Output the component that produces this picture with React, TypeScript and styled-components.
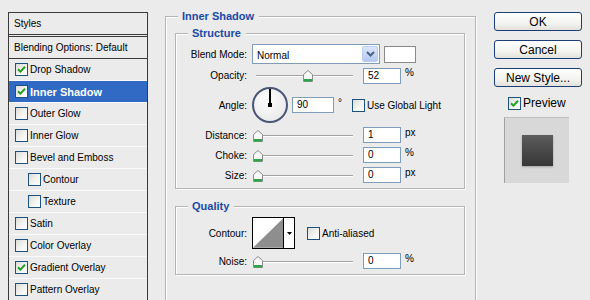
import styled, { createGlobalStyle } from 'styled-components';

const GlobalStyles = createGlobalStyle`
  html, body {
    margin: 0;
    padding: 0;
    background: #ebebeb;
  }
  body {
    font-family: 'Liberation Sans', Arial, sans-serif;
    font-size: 10px;
    color: #000;
  }
`;

const Page = styled.div`
  display: flex;
  align-items: flex-start;
  width: 590px;
  height: 300px;
  padding-top: 12px;
  box-sizing: border-box;
  overflow: hidden;
`;

// ---------- левый список стилей ----------
const Sidebar = styled.div`
  margin-left: 8px;
  width: 140px;
  box-sizing: border-box;
  border: 1px solid #3a3a3a;
  border-bottom: none;
  flex-shrink: 0;
`;

const HeaderRow = styled.div`
  height: 21px;
  line-height: 21px;
  padding-left: 5px;
  border-bottom: 3px double #3a3a3a;
`;

const BlendRow = styled.div`
  height: 21px;
  line-height: 21px;
  padding-left: 5px;
  border-bottom: 1px solid #3a3a3a;
`;

const StyleRow = styled.div<{ $active?: boolean; $indent?: boolean }>`
  display: flex;
  align-items: center;
  gap: 2px;
  height: 21px;
  padding-left: ${p => (p.$indent ? 19 : 6)}px;
  border-bottom: 1px solid #fafafa;
  background: ${p => (p.$active ? '#316ac5' : 'transparent')};
  color: ${p => (p.$active ? '#fff' : '#000')};
  font-weight: ${p => (p.$active ? 'bold' : 'normal')};
  font-size: ${p => (p.$active ? 11 : 10)}px;
`;

const Box = styled.span`
  position: relative;
  display: inline-flex;
  align-items: center;
  justify-content: center;
  width: 13px;
  height: 13px;
  box-sizing: border-box;
  border: 1px solid #1c5180;
  background: linear-gradient(135deg, #dcdcd7 0%, #f5f5f3 60%, #fff 100%);
  flex-shrink: 0;
`;

const Check = ({ on }: { on?: boolean }) => (
  <Box>
    {on && (
      <svg width="9" height="9" viewBox="0 0 9 9">
        <path d="M1 4.2 L3.4 6.6 L8 1.8" fill="none" stroke="#21a121" strokeWidth="2" />
      </svg>
    )}
  </Box>
);

// ---------- средняя часть ----------
const Main = styled.div`
  margin-left: 17px;
  padding-top: 4px;
  flex-shrink: 0;
`;

const Group = styled.div<{ $outer?: boolean }>`
  position: relative;
  box-sizing: border-box;
  border: 1px solid #b4b4b4;
  box-shadow: inset 1px 1px 0 #fff, 1px 1px 0 #fff;
  width: ${p => (p.$outer ? 311 : 290)}px;
  padding: ${p => (p.$outer ? '16px 10px 0 9px' : '10px 0 3px 0')};
  min-height: ${p => (p.$outer ? '300px' : '0')};
  & + & {
    margin-top: 17px;
  }
`;

const Legend = styled.span`
  position: absolute;
  top: -8px;
  left: 12px;
  padding: 0 5px 0 4px;
  background: #ebebeb;
  color: #1a49a8;
  font-weight: bold;
  font-size: 11px;
  line-height: 14px;
`;

const Row = styled.div<{ $h: number; $mt?: number }>`
  display: flex;
  align-items: center;
  height: ${p => p.$h}px;
  margin-top: ${p => p.$mt ?? 0}px;
`;

const Label = styled.span`
  width: 71px;
  margin-right: 5px;
  text-align: right;
  flex-shrink: 0;
`;

const Select = styled.div`
  display: flex;
  align-items: center;
  width: 128px;
  height: 20px;
  box-sizing: border-box;
  border: 1px solid #7f9db9;
  background: #fff;
  padding: 1px;
`;

const SelectText = styled.span`
  flex: 1;
  padding-left: 3px;
  padding-top: 2px;
`;

const SelectButton = styled.span`
  display: flex;
  align-items: center;
  justify-content: center;
  width: 16px;
  height: 16px;
  border-radius: 2px;
  background: linear-gradient(#dbe6fb, #b5c9f2);
  border: 1px solid #b9ccf3;
  box-sizing: border-box;
`;

const Swatch = styled.span`
  width: 32px;
  height: 17px;
  margin-left: 4px;
  box-sizing: border-box;
  border: 1px solid #8a8a8a;
  background: #fff;
`;

const Track = styled.div<{ $w?: number }>`
  position: relative;
  width: ${p => p.$w ?? 101}px;
  height: 11px;
  flex-shrink: 0;
  &::before {
    content: '';
    position: absolute;
    left: 4px;
    right: 0;
    top: 5px;
    height: 1px;
    background: #a4a4a4;
    border-bottom: 1px solid #fff;
  }
`;

const Thumb = styled.svg`
  position: absolute;
  top: 0;
`;

const Slider = ({ value }: { value: number }) => (
  <Track>
    <Thumb width="10" height="12" viewBox="0 0 10 12" style={{ left: Math.round(1 + value * 0.96) }}>
      <path d="M0.5 11.5 V4.5 L5 0.5 L9.5 4.5 V11.5 Z" fill="#f8f8f8" stroke="#8c8c8c" />
      <rect x="1" y="9" width="8" height="2.5" fill="#2ea54a" />
    </Thumb>
  </Track>
);

const Field = styled.span<{ $w?: number; $ml?: number }>`
  display: inline-block;
  width: ${p => p.$w ?? 38}px;
  height: 16px;
  line-height: 14px;
  margin-left: ${p => p.$ml ?? 10}px;
  padding-left: 4px;
  box-sizing: border-box;
  border: 1px solid #7f9db9;
  background: #fff;
  flex-shrink: 0;
`;

const Unit = styled.span`
  margin-left: 4px;
  position: relative;
  top: -3px;
`;

const Dial = styled.div`
  position: relative;
  width: 36px;
  height: 36px;
  box-sizing: border-box;
  border-radius: 50%;
  border: 2px solid #4b5676;
  background: radial-gradient(circle at 40% 35%, #fdfdfd, #e4e4e4);
  flex-shrink: 0;
  &::before {
    content: '';
    position: absolute;
    left: 15px;
    top: 0;
    width: 2px;
    height: 16px;
    background: #000;
  }
  &::after {
    content: '';
    position: absolute;
    left: 14px;
    top: 14px;
    width: 4px;
    height: 4px;
    background: #000;
  }
`;

const CheckLabel = styled.label<{ $ml?: number }>`
  display: inline-flex;
  align-items: center;
  gap: 2px;
  margin-left: ${p => p.$ml ?? 0}px;
`;

const ContourPicker = styled.div`
  display: flex;
  width: 43px;
  height: 32px;
  box-sizing: border-box;
  border: 1px solid #000;
  background: #fff;
  flex-shrink: 0;
`;

const ContourDrop = styled.span`
  display: flex;
  align-items: center;
  justify-content: center;
  width: 10px;
  border-left: 1px solid #000;
`;

// ---------- правая колонка ----------
const Side = styled.div`
  display: flex;
  flex-direction: column;
  align-items: flex-start;
  margin-left: 18px;
  width: 88px;
`;

const Button = styled.button<{ $mt?: number }>`
  width: 88px;
  height: 19px;
  margin-top: ${p => p.$mt ?? 0}px;
  padding: 0;
  border: 1px solid #1c3e77;
  border-radius: 3px;
  background: linear-gradient(#ffffff 0%, #f4f4f0 60%, #e2e1dc 100%);
  font-family: 'Liberation Sans', Arial, sans-serif;
  font-size: 12px;
  color: #000;
`;

const PreviewLine = styled(CheckLabel)`
  margin: 9px 0 0 14px;
  font-size: 12px;
`;

const PreviewBox = styled.div`
  display: flex;
  align-items: center;
  justify-content: center;
  width: 65px;
  height: 66px;
  margin: 7px 0 0 10px;
  box-sizing: border-box;
  border-left: 1px solid #a0a0a0;
  border-top: 1px solid #c0c0c0;
  background: #d8d8d8;
`;

const PreviewSquare = styled.div`
  width: 31px;
  height: 31px;
  background: linear-gradient(#5c5c5c, #363636);
  box-shadow: 0 1px 2px rgba(0, 0, 0, 0.25);
`;

const styles: { name: string; on?: boolean; active?: boolean; indent?: boolean }[] = [
  { name: 'Drop Shadow', on: true },
  { name: 'Inner Shadow', on: true, active: true },
  { name: 'Outer Glow' },
  { name: 'Inner Glow' },
  { name: 'Bevel and Emboss' },
  { name: 'Contour', indent: true },
  { name: 'Texture', indent: true },
  { name: 'Satin' },
  { name: 'Color Overlay' },
  { name: 'Gradient Overlay', on: true },
  { name: 'Pattern Overlay' },
];

const App = () => (
  <Page>
    <GlobalStyles />
    <Sidebar>
      <HeaderRow>Styles</HeaderRow>
      <BlendRow>Blending Options: Default</BlendRow>
      {styles.map(s => (
        <StyleRow key={s.name} $active={s.active} $indent={s.indent}>
          <Check on={s.on} />
          {s.name}
        </StyleRow>
      ))}
    </Sidebar>

    <Main>
      <Group $outer>
        <Legend>Inner Shadow</Legend>
        <Group>
          <Legend>Structure</Legend>
          <Row $h={20}>
            <Label>Blend Mode:</Label>
            <Select>
              <SelectText>Normal</SelectText>
              <SelectButton>
                <svg width="9" height="6" viewBox="0 0 9 6">
                  <path d="M1 1 L4.5 4.5 L8 1" fill="none" stroke="#4d6185" strokeWidth="2" />
                </svg>
              </SelectButton>
            </Select>
            <Swatch />
          </Row>
          <Row $h={19} $mt={2}>
            <Label>Opacity:</Label>
            <Slider value={52} />
            <Field>52</Field>
            <Unit>%</Unit>
          </Row>
          <Row $h={40}>
            <Label>Angle:</Label>
            <Dial />
            <Field $w={42} $ml={4}>90</Field>
            <Unit>°</Unit>
            <CheckLabel $ml={10}>
              <Check />
              Use Global Light
            </CheckLabel>
          </Row>
          <Row $h={20}>
            <Label>Distance:</Label>
            <Slider value={0} />
            <Field>1</Field>
            <Unit>px</Unit>
          </Row>
          <Row $h={20}>
            <Label>Choke:</Label>
            <Slider value={0} />
            <Field>0</Field>
            <Unit>%</Unit>
          </Row>
          <Row $h={20}>
            <Label>Size:</Label>
            <Slider value={0} />
            <Field>0</Field>
            <Unit>px</Unit>
          </Row>
        </Group>

        <Group>
          <Legend>Quality</Legend>
          <Row $h={32}>
            <Label>Contour:</Label>
            <ContourPicker>
              <svg width="31" height="30" viewBox="0 0 31 30">
                <path d="M0 30 L31 0 L31 30 Z" fill="#8e8e8e" />
              </svg>
              <ContourDrop>
                <svg width="5" height="3" viewBox="0 0 5 3">
                  <path d="M0 0 H5 L2.5 3 Z" fill="#000" />
                </svg>
              </ContourDrop>
            </ContourPicker>
            <CheckLabel $ml={12}>
              <Check />
              Anti-aliased
            </CheckLabel>
          </Row>
          <Row $h={20} $mt={2}>
            <Label>Noise:</Label>
            <Slider value={0} />
            <Field>0</Field>
            <Unit>%</Unit>
          </Row>
        </Group>
      </Group>
    </Main>

    <Side>
      <Button>OK</Button>
      <Button $mt={9}>Cancel</Button>
      <Button $mt={9}>New Style...</Button>
      <PreviewLine>
        <Check on />
        Preview
      </PreviewLine>
      <PreviewBox>
        <PreviewSquare />
      </PreviewBox>
    </Side>
  </Page>
);

export default App;
